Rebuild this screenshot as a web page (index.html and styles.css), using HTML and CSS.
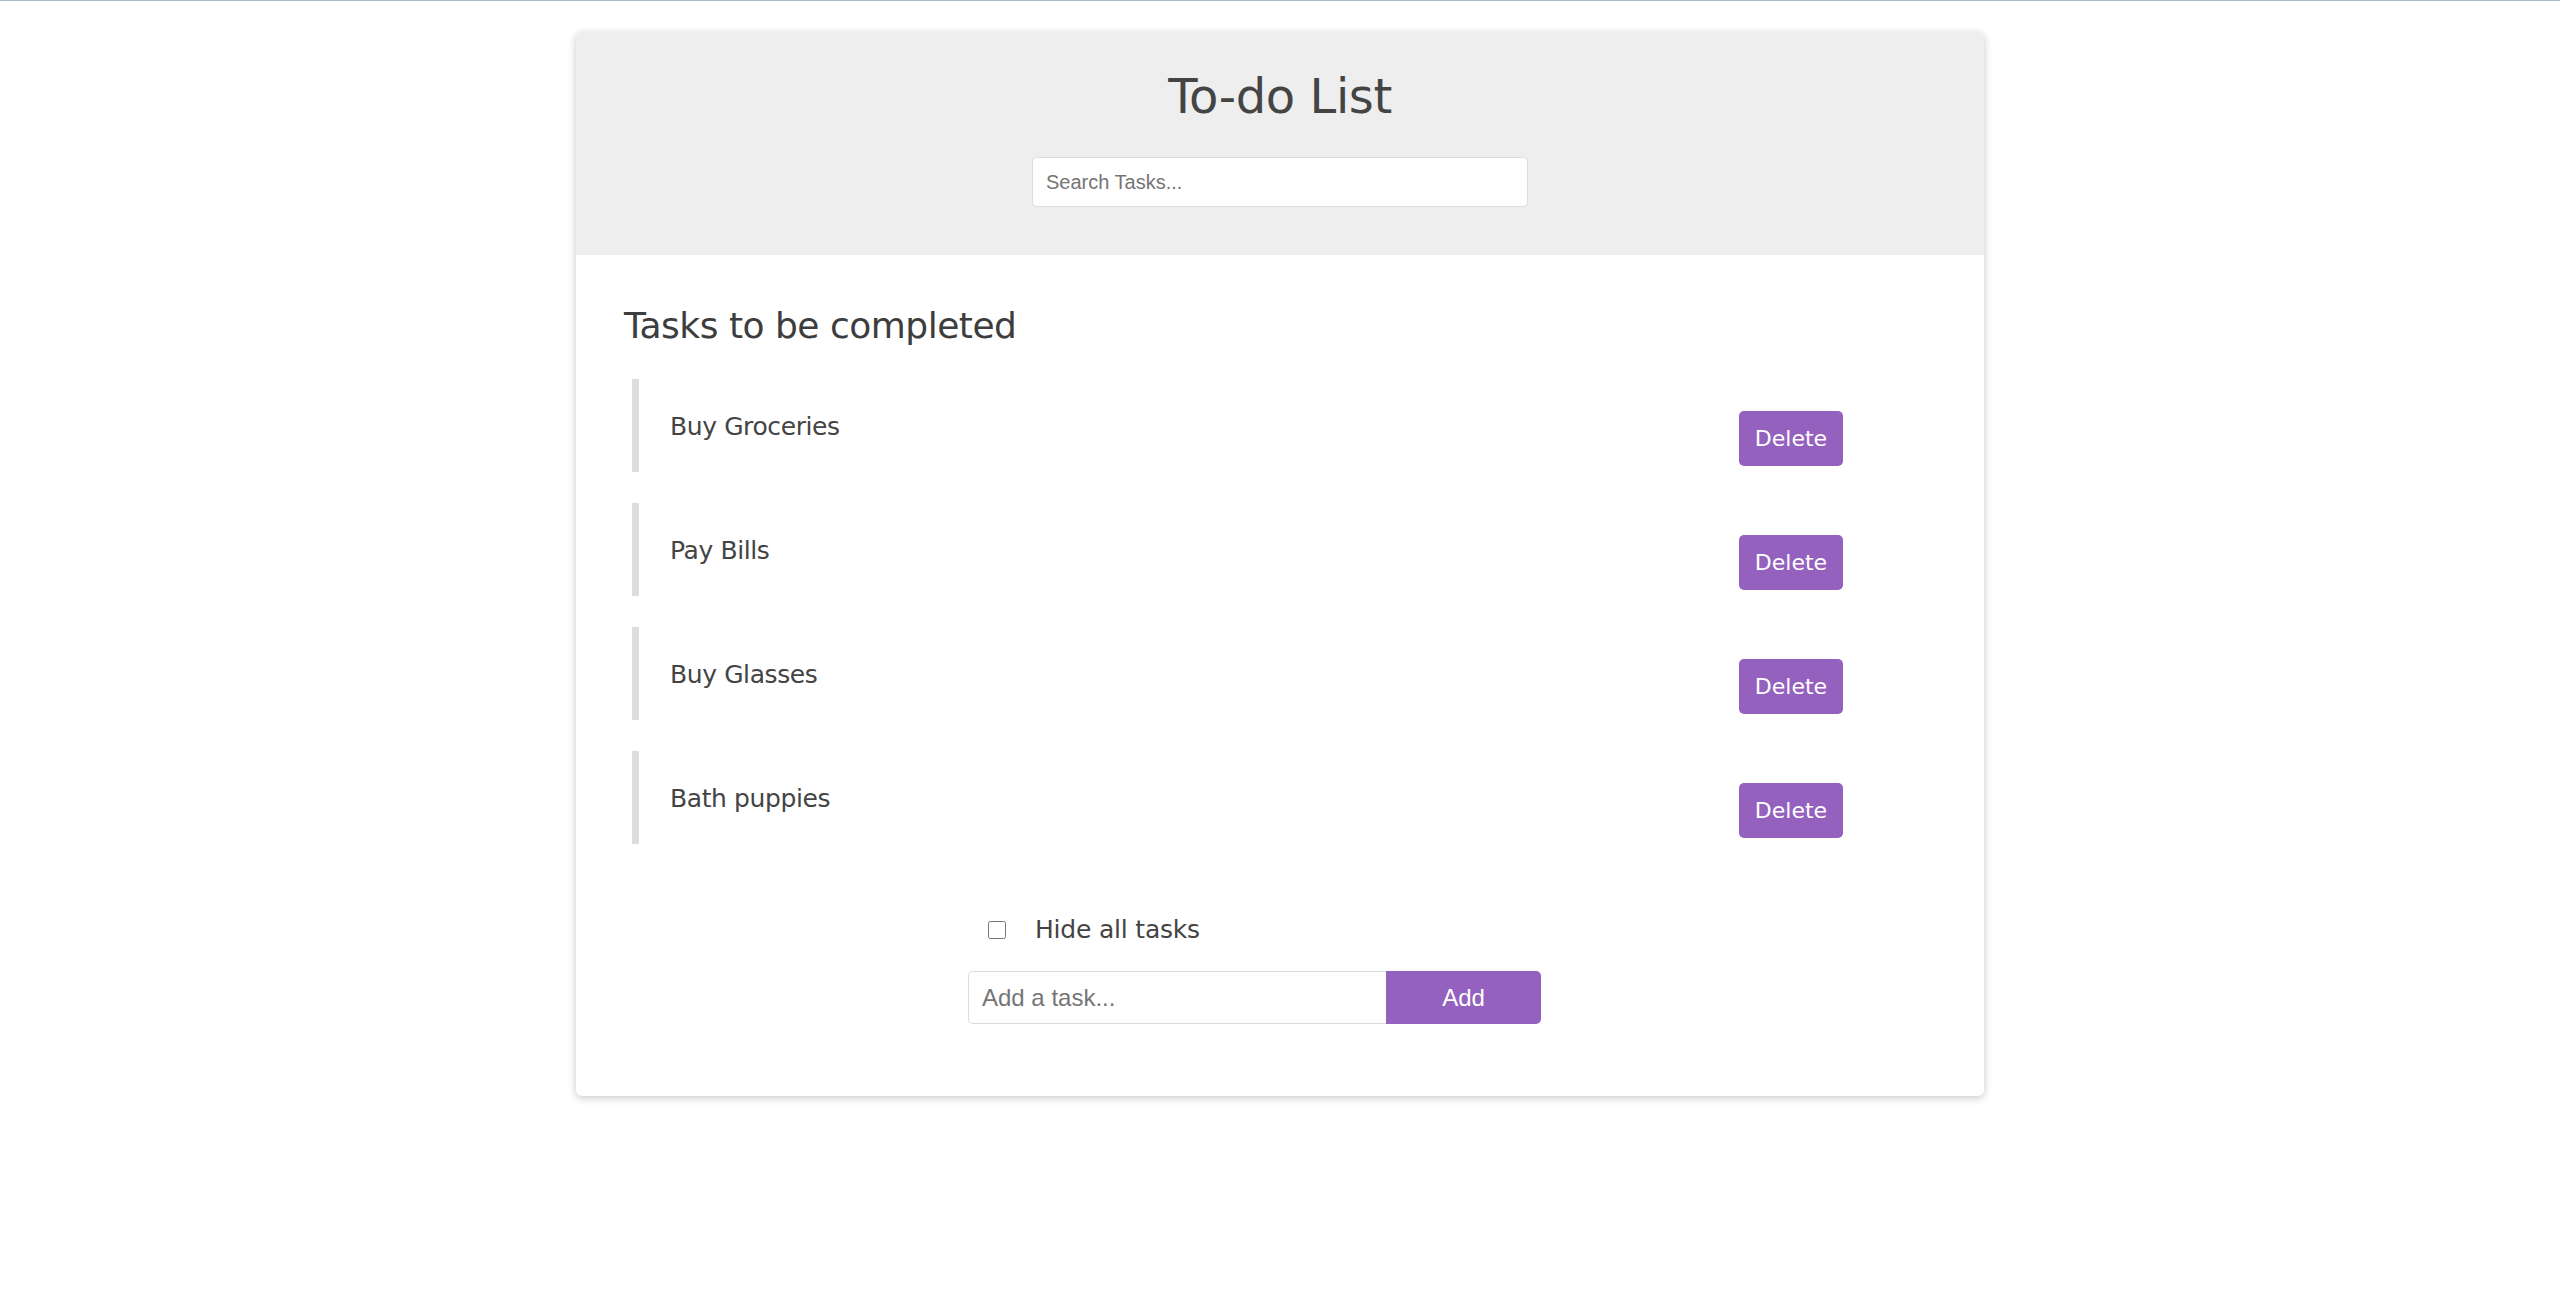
FILE: index.html
```html
<!DOCTYPE html>
<html lang="en">
<head>
<meta charset="utf-8">
<title>To-do List</title>
<link rel="stylesheet" href="styles.css">
</head>
<body>
<div class="topline"></div>
<div class="card">
  <header class="card-header">
    <h1 class="title">To-do List</h1>
    <input class="search" type="text" placeholder="Search Tasks...">
  </header>
  <main class="card-body">
    <h2 class="section-title">Tasks to be completed</h2>
    <ul class="task-list">
      <li class="task"><span class="task-name">Buy Groceries</span><button class="delete">Delete</button></li>
      <li class="task"><span class="task-name">Pay Bills</span><button class="delete">Delete</button></li>
      <li class="task"><span class="task-name">Buy Glasses</span><button class="delete">Delete</button></li>
      <li class="task"><span class="task-name">Bath puppies</span><button class="delete">Delete</button></li>
    </ul>
    <div class="footer">
      <label class="hide-row"><input class="hide-check" type="checkbox"><span class="hide-label">Hide all tasks</span></label>
      <form class="add-form">
        <input class="add-input" type="text" placeholder="Add a task...">
        <button class="add-btn" type="button">Add</button>
      </form>
    </div>
  </main>
</div>
</body>
</html>
```
FILE: styles.css
```css
html, body {
  margin: 0;
  padding: 0;
  background: #fff;
}
body {
  font-family: "DejaVu Sans", Verdana, sans-serif;
  color: #444;
}
.topline {
  height: 1px;
  background: #a9b9d2;
}
.card {
  width: 1408px;
  margin: 31px auto 40px;
  background: #fff;
  border-radius: 6px;
  box-shadow: 0 2px 8px rgba(0, 0, 0, 0.22);
  overflow: hidden;
}
.card-header {
  background: #eeeeee;
  padding: 36px 0 48px;
  text-align: center;
}
.title {
  margin: 0;
  font-size: 48px;
  line-height: 56px;
  font-weight: normal;
  letter-spacing: -0.4px;
  color: #444;
}
.search {
  display: block;
  box-sizing: border-box;
  width: 496px;
  height: 50px;
  margin: 33px auto 0;
  padding: 0 13px;
  border: 1px solid #dcdcdc;
  border-radius: 5px;
  background: #fff;
  font-family: "Liberation Sans", Arial, sans-serif;
  font-size: 20px;
  color: #333;
  outline: none;
}
.search::placeholder, .add-input::placeholder {
  color: #757575;
}
.card-body {
  padding: 0 48px 72px;
}
.section-title {
  margin: 50px 0 32px;
  font-size: 36px;
  line-height: 42px;
  font-weight: normal;
  letter-spacing: -0.5px;
  color: #3d3d3d;
}
.task-list {
  list-style: none;
  margin: 0 8px;
  padding: 0;
  display: flex;
  flex-direction: column;
  gap: 31px;
}
.task {
  display: flex;
  align-items: flex-start;
  justify-content: space-between;
  border-left: 7px solid #dddddd;
  padding: 32px 85px 6px 31px;
}
.task-name {
  padding-top: 1px;
  font-size: 25px;
  line-height: 29px;
  letter-spacing: -0.4px;
  color: #444;
}
.delete {
  width: 104px;
  height: 55px;
  border: none;
  border-radius: 5px;
  background: #9461be;
  color: #fff;
  font-family: "DejaVu Sans", Verdana, sans-serif;
  font-size: 22px;
  padding: 0;
}
.footer {
  margin-top: 71px;
  padding-left: 344px;
}
.hide-row {
  display: flex;
  align-items: center;
  height: 29px;
  margin-left: 20px;
}
.hide-check {
  width: 18px;
  height: 18px;
  margin: 0 29px 0 0;
}
.hide-label {
  font-size: 25px;
  line-height: 29px;
  letter-spacing: -0.2px;
  color: #444;
}
.add-form {
  display: flex;
  margin: 27px 0 0;
}
.add-input {
  box-sizing: border-box;
  width: 418px;
  height: 53px;
  padding: 0 13px;
  border: 1px solid #dcdcdc;
  border-right: none;
  border-radius: 5px 0 0 5px;
  font-family: "Liberation Sans", Arial, sans-serif;
  font-size: 24px;
  color: #333;
  outline: none;
}
.add-btn {
  width: 155px;
  height: 53px;
  border: none;
  border-radius: 0 5px 5px 0;
  background: #9461be;
  color: #fff;
  font-family: "Liberation Sans", Arial, sans-serif;
  font-size: 24px;
  padding: 0;
}
```
